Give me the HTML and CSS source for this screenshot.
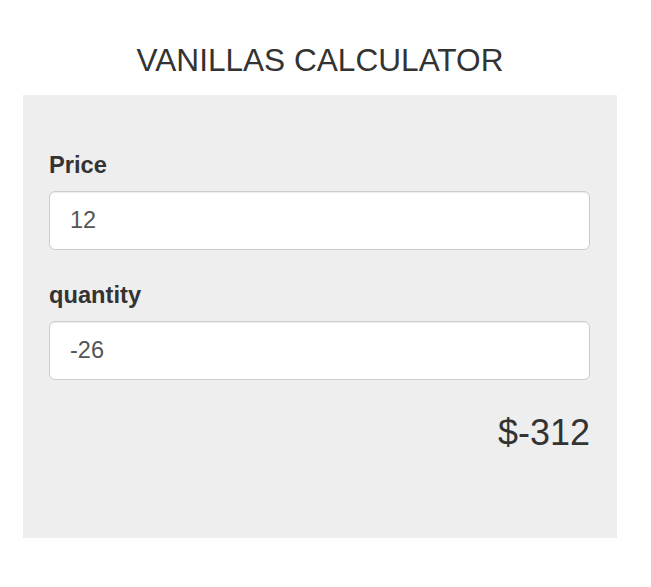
FILE: index.html
```html
<!DOCTYPE html>
<html>
<head>
<meta charset="utf-8">
<link rel="stylesheet" href="styles.css">
</head>
<body>
<div class="app">
  <h1 class="title">VANILLAS CALCULATOR</h1>
  <div class="panel">
    <div class="field">
      <label class="label">Price</label>
      <input class="input" type="text" value="12">
    </div>
    <div class="field">
      <label class="label">quantity</label>
      <input class="input" type="text" value="-26">
    </div>
    <div class="result">$-312</div>
  </div>
</div>
</body>
</html>
```
FILE: styles.css
```css
html, body {
  margin: 0;
  padding: 0;
  background: #fff;
}
body {
  font-family: "Liberation Sans", Arial, sans-serif;
  color: #333;
}
.app {
  width: 594px;
  margin-left: 23px;
  display: flex;
  flex-direction: column;
}
.title {
  margin: 0;
  padding-top: 42px;
  margin-bottom: 17px;
  font-size: 31.6px;
  line-height: 36px;
  font-weight: normal;
  text-align: center;
  color: #333;
}
.panel {
  background: #eeeeee;
  padding: 56px 27px 85px 26px;
  display: flex;
  flex-direction: column;
  gap: 31px;
}
.field {
  display: flex;
  flex-direction: column;
  gap: 12px;
}
.label {
  font-size: 23.7px;
  line-height: 28px;
  font-weight: bold;
  color: #333;
}
.input {
  box-sizing: border-box;
  width: 100%;
  height: 59px;
  margin: 0;
  padding: 0 20px;
  border: 1px solid #ccc;
  border-radius: 6px;
  background: #fff;
  font-family: "Liberation Sans", Arial, sans-serif;
  font-size: 23.5px;
  color: #555;
  box-shadow: inset 0 1px 1px rgba(0,0,0,0.075);
  outline: none;
}
.result {
  margin-top: 2px;
  text-align: right;
  font-size: 36px;
  line-height: 40px;
  color: #333;
}
```
